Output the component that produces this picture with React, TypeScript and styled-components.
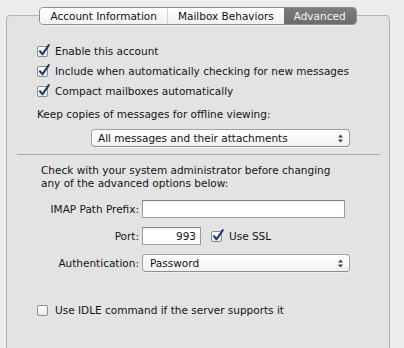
import React from 'react';
import styled, { createGlobalStyle } from 'styled-components';

const Global = createGlobalStyle`
  html, body { margin: 0; padding: 0; background: #ececec; }
  body {
    font-family: "DejaVu Sans", "Liberation Sans", sans-serif;
    font-size: 10.5px;
    color: #141414;
    overflow: hidden;
  }
`;

const Page = styled.div`
  width: 404px;
  height: 348px;
  overflow: hidden;
  padding: 15px 0 0 6px;
  box-sizing: border-box;
`;

const Panel = styled.div`
  width: 384px;
  height: 345px;
  box-sizing: border-box;
  border: 1px solid #b3b3b3;
  border-radius: 4px 4px 0 0;
  background: #e3e3e3;
  display: flex;
  flex-direction: column;
`;

const TabBar = styled.div`
  display: flex;
  justify-content: center;
  margin-top: -9px;
`;

const TabGroup = styled.div`
  display: flex;
  height: 18px;
  box-sizing: border-box;
  border: 1px solid #8f8f8f;
  border-radius: 4px;
  overflow: hidden;
  box-shadow: 0 1px 0 rgba(255, 255, 255, 0.4);
`;

const Tab = styled.div<{ $selected?: boolean; $sep?: boolean }>`
  padding: 0 10px;
  line-height: 16px;
  white-space: nowrap;
  color: ${(p) => (p.$selected ? '#f6f6f6' : '#111')};
  background: ${(p) =>
    p.$selected
      ? 'linear-gradient(#7d7d7d, #6b6b6b)'
      : 'linear-gradient(#ffffff, #f1f1f1)'};
  border-left: ${(p) => (p.$sep ? '1px solid #d4d4d4' : 'none')};
`;

const CheckSection = styled.div`
  padding-left: 30px;
  margin-top: 16px;
  display: flex;
  flex-direction: column;
`;

const CheckRow = styled.label<{ $top?: number }>`
  display: flex;
  align-items: center;
  height: 20px;
  gap: 7px;
  white-space: nowrap;
  margin-top: ${(p) => p.$top ?? 0}px;
`;

const Box = styled.span`
  position: relative;
  width: 11px;
  height: 11px;
  box-sizing: border-box;
  border: 1px solid #8b8b8b;
  border-radius: 2px;
  background: linear-gradient(#ffffff, #ececec);
  flex: none;
`;

const Tick = styled.svg`
  position: absolute;
  left: 0px;
  top: -3px;
`;

const Text = styled.div<{ $top?: number }>`
  line-height: 16px;
  margin-top: ${(p) => p.$top ?? 0}px;
  white-space: nowrap;
`;

const Popup = styled.div<{ $width: number; $left?: number; $top?: number; $pad?: number }>`
  width: ${(p) => p.$width}px;
  height: 18px;
  box-sizing: border-box;
  margin-left: ${(p) => p.$left ?? 0}px;
  margin-top: ${(p) => p.$top ?? 0}px;
  border: 1px solid #a2a2a2;
  border-bottom-color: #8e8e8e;
  border-radius: 4px;
  background: linear-gradient(#ffffff, #f2f2f2);
  box-shadow: 0 1px 0 rgba(255, 255, 255, 0.5);
  display: flex;
  align-items: center;
  justify-content: space-between;
  padding: 0 6px 0 ${(p) => p.$pad ?? 6}px;
  white-space: nowrap;
`;

const Divider = styled.div`
  margin: 7px 0 0 10px;
  width: 363px;
  height: 1px;
  background: #a9a9a9;
`;

const Para = styled.p`
  margin: 9px 0 0 34px;
  line-height: 13px;
`;

const Form = styled.div`
  display: grid;
  grid-template-columns: 132px auto;
  column-gap: 3px;
  row-gap: 9px;
  margin-top: 10px;
  align-items: center;
`;

const Label = styled.div`
  text-align: right;
  white-space: nowrap;
`;

const FieldRow = styled.div`
  display: flex;
  align-items: center;
`;

const Field = styled.div<{ $width: number }>`
  width: ${(p) => p.$width}px;
  height: 18px;
  box-sizing: border-box;
  border: 1px solid #9c9c9c;
  border-top-color: #858585;
  background: #fff;
  box-shadow: inset 0 1px 1px rgba(0, 0, 0, 0.08);
  text-align: right;
  padding-right: 4px;
  line-height: 16px;
`;

const InlineCheck = styled.label`
  display: flex;
  align-items: center;
  gap: 7px;
  margin-left: 10px;
`;

const IdleSection = styled.div`
  padding-left: 30px;
  margin-top: 28px;
`;

function Checkbox({ checked }: { checked?: boolean }) {
  return (
    <Box>
      {checked && (
        <Tick width="13" height="13" viewBox="0 0 13 13">
          <path
            d="M2 7.2 L4.6 10.2 L10.8 1.2"
            fill="none"
            stroke="#1d3d78"
            strokeWidth="2.1"
            strokeLinecap="round"
            strokeLinejoin="round"
          />
        </Tick>
      )}
    </Box>
  );
}

function Arrows() {
  return (
    <svg width="5" height="9" viewBox="0 0 5 9">
      <path d="M0 3.6 L2.5 0.4 L5 3.6 Z" fill="#3c3c3c" />
      <path d="M0 5.4 L2.5 8.6 L5 5.4 Z" fill="#3c3c3c" />
    </svg>
  );
}

export default function App() {
  return (
    <>
      <Global />
      <Page>
        <Panel>
          <TabBar>
            <TabGroup>
              <Tab>Account Information</Tab>
              <Tab $sep>Mailbox Behaviors</Tab>
              <Tab $selected>Advanced</Tab>
            </TabGroup>
          </TabBar>

          <CheckSection>
            <CheckRow>
              <Checkbox checked />
              Enable this account
            </CheckRow>
            <CheckRow>
              <Checkbox checked />
              Include when automatically checking for new messages
            </CheckRow>
            <CheckRow>
              <Checkbox checked />
              Compact mailboxes automatically
            </CheckRow>
            <Text $top={5}>Keep copies of messages for offline viewing:</Text>
            <Popup $width={259} $left={54} $top={7}>
              <span>All messages and their attachments</span>
              <Arrows />
            </Popup>
          </CheckSection>

          <Divider />

          <Para>
            Check with your system administrator before changing
            <br />
            any of the advanced options below:
          </Para>

          <Form>
            <Label>IMAP Path Prefix:</Label>
            <Field $width={203} />
            <Label>Port:</Label>
            <FieldRow>
              <Field $width={59}>993</Field>
              <InlineCheck>
                <Checkbox checked />
                Use SSL
              </InlineCheck>
            </FieldRow>
            <Label>Authentication:</Label>
            <Popup $width={208} $pad={7}>
              <span>Password</span>
              <Arrows />
            </Popup>
          </Form>

          <IdleSection>
            <CheckRow>
              <Checkbox />
              Use IDLE command if the server supports it
            </CheckRow>
          </IdleSection>
        </Panel>
      </Page>
    </>
  );
}
